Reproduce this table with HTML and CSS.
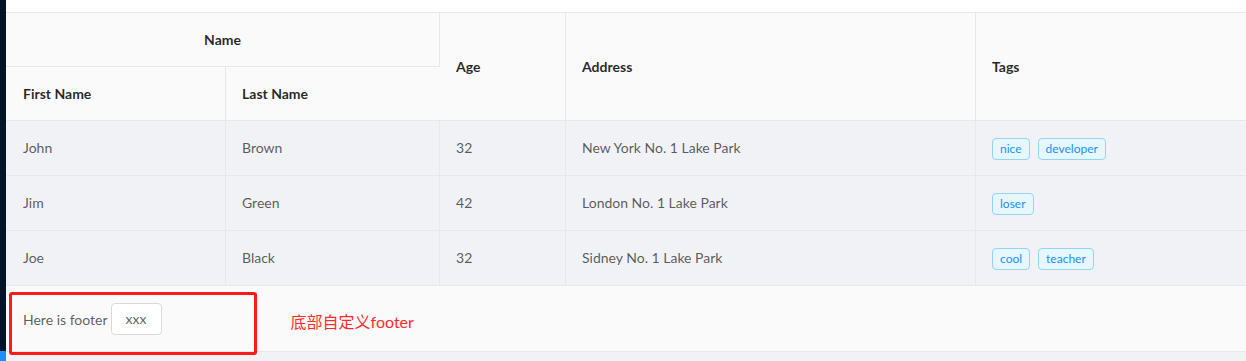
FILE: index.html
```html
<!DOCTYPE html>
<html>
<head>
<meta charset="utf-8">
<link rel="stylesheet" href="styles.css">
</head>
<body>
<div class="layout">
  <aside class="sider"><div class="sider-active"></div></aside>
  <main class="main">
    <div class="topbar"></div>
    <table class="tbl">
      <colgroup>
        <col class="c1"><col class="c2"><col class="c3"><col class="c4"><col class="c5">
      </colgroup>
      <thead>
        <tr class="hrow">
          <th colspan="2" class="center">Name</th>
          <th rowspan="2">Age</th>
          <th rowspan="2">Address</th>
          <th rowspan="2">Tags</th>
        </tr>
        <tr class="hrow">
          <th>First Name</th>
          <th>Last Name</th>
        </tr>
      </thead>
      <tbody>
        <tr class="brow">
          <td>John</td><td>Brown</td><td>32</td><td>New York No. 1 Lake Park</td>
          <td><span class="tag">nice</span><span class="tag">developer</span></td>
        </tr>
        <tr class="brow">
          <td>Jim</td><td>Green</td><td>42</td><td>London No. 1 Lake Park</td>
          <td><span class="tag">loser</span></td>
        </tr>
        <tr class="brow">
          <td>Joe</td><td>Black</td><td>32</td><td>Sidney No. 1 Lake Park</td>
          <td><span class="tag">cool</span><span class="tag">teacher</span></td>
        </tr>
      </tbody>
    </table>
    <div class="footer">
      <span class="footer-label">Here is footer</span>
      <span class="footer-input">xxx</span>
      <span class="note">底部自定义footer</span>
      <div class="redbox"></div>
    </div>
    <div class="rest"></div>
  </main>
</div>
</body>
</html>
```
FILE: styles.css
```css
* { box-sizing: border-box; }
html, body { margin: 0; padding: 0; }
body {
  width: 1246px;
  height: 361px;
  overflow: hidden;
  background: #f0f2f5;
  font-family: Lato, "Noto Sans CJK SC", sans-serif;
  font-size: 14px;
}
.layout { display: flex; height: 361px; }
.sider {
  width: 6px;
  flex: none;
  background: #001529;
  display: flex;
  flex-direction: column;
  justify-content: flex-end;
}
.sider-active { height: 10px; background: #1890ff; }
.main { flex: 1; display: flex; flex-direction: column; }
.topbar { height: 13px; background: #fff; border-bottom: 1px solid #e8e8e8; flex: none; }
.tbl {
  border-collapse: separate;
  border-spacing: 0;
  table-layout: fixed;
  width: 1240px;
}
.c1 { width: 220px; }
.c2 { width: 214px; }
.c3 { width: 126px; }
.c4 { width: 410px; }
.c5 { width: 270px; }
.tbl th, .tbl td {
  padding: 0 16px;
  border-right: 1px solid #e8e8e8;
  border-bottom: 1px solid #e8e8e8;
  text-align: left;
  vertical-align: middle;
  line-height: 22px;
}
.tbl th:first-child, .tbl td:first-child { padding-left: 17px; }
.tbl th.center { padding-left: 16px; }
.tbl th:last-child, .tbl td:last-child { border-right: none; }
.tbl th {
  background: #fafafa;
  color: rgba(0,0,0,0.85);
  font-weight: 700;
}
.tbl th.center { text-align: center; }
.hrow { height: 54px; }
.brow { height: 55px; }
.tbl td { color: rgba(0,0,0,0.65); }
.tag {
  display: inline-block;
  height: 22px;
  line-height: 20px;
  padding: 0 7px;
  margin-right: 8px;
  font-size: 12px;
  color: #1890ff;
  background: #e6f7ff;
  border: 1px solid #91d5ff;
  border-radius: 4px;
  vertical-align: middle;
}
.footer {
  position: relative;
  height: 66px;
  flex: none;
  background: #fafafa;
  border-bottom: 1px solid #e8e8e8;
  display: flex;
  align-items: center;
  padding: 0 17px;
  color: rgba(0,0,0,0.65);
}
.footer-label { padding-top: 1px; }
.footer-input {
  margin-left: 3px;
  width: 51px;
  height: 32px;
  border: 1px solid #d9d9d9;
  border-radius: 4px;
  background: #fff;
  display: flex;
  align-items: center;
  justify-content: center;
  font-size: 14px;
}
.note {
  margin-left: 129px;
  padding-top: 4px;
  font-size: 16px;
  color: #ff2a2a;
}
.redbox {
  position: absolute;
  left: 3px;
  top: 6px;
  width: 248px;
  height: 63px;
  border: 3px solid #ff1a1a;
  border-radius: 3px;
  z-index: 2;
}
.rest { flex: 1; background: #f0f2f5; }
```
